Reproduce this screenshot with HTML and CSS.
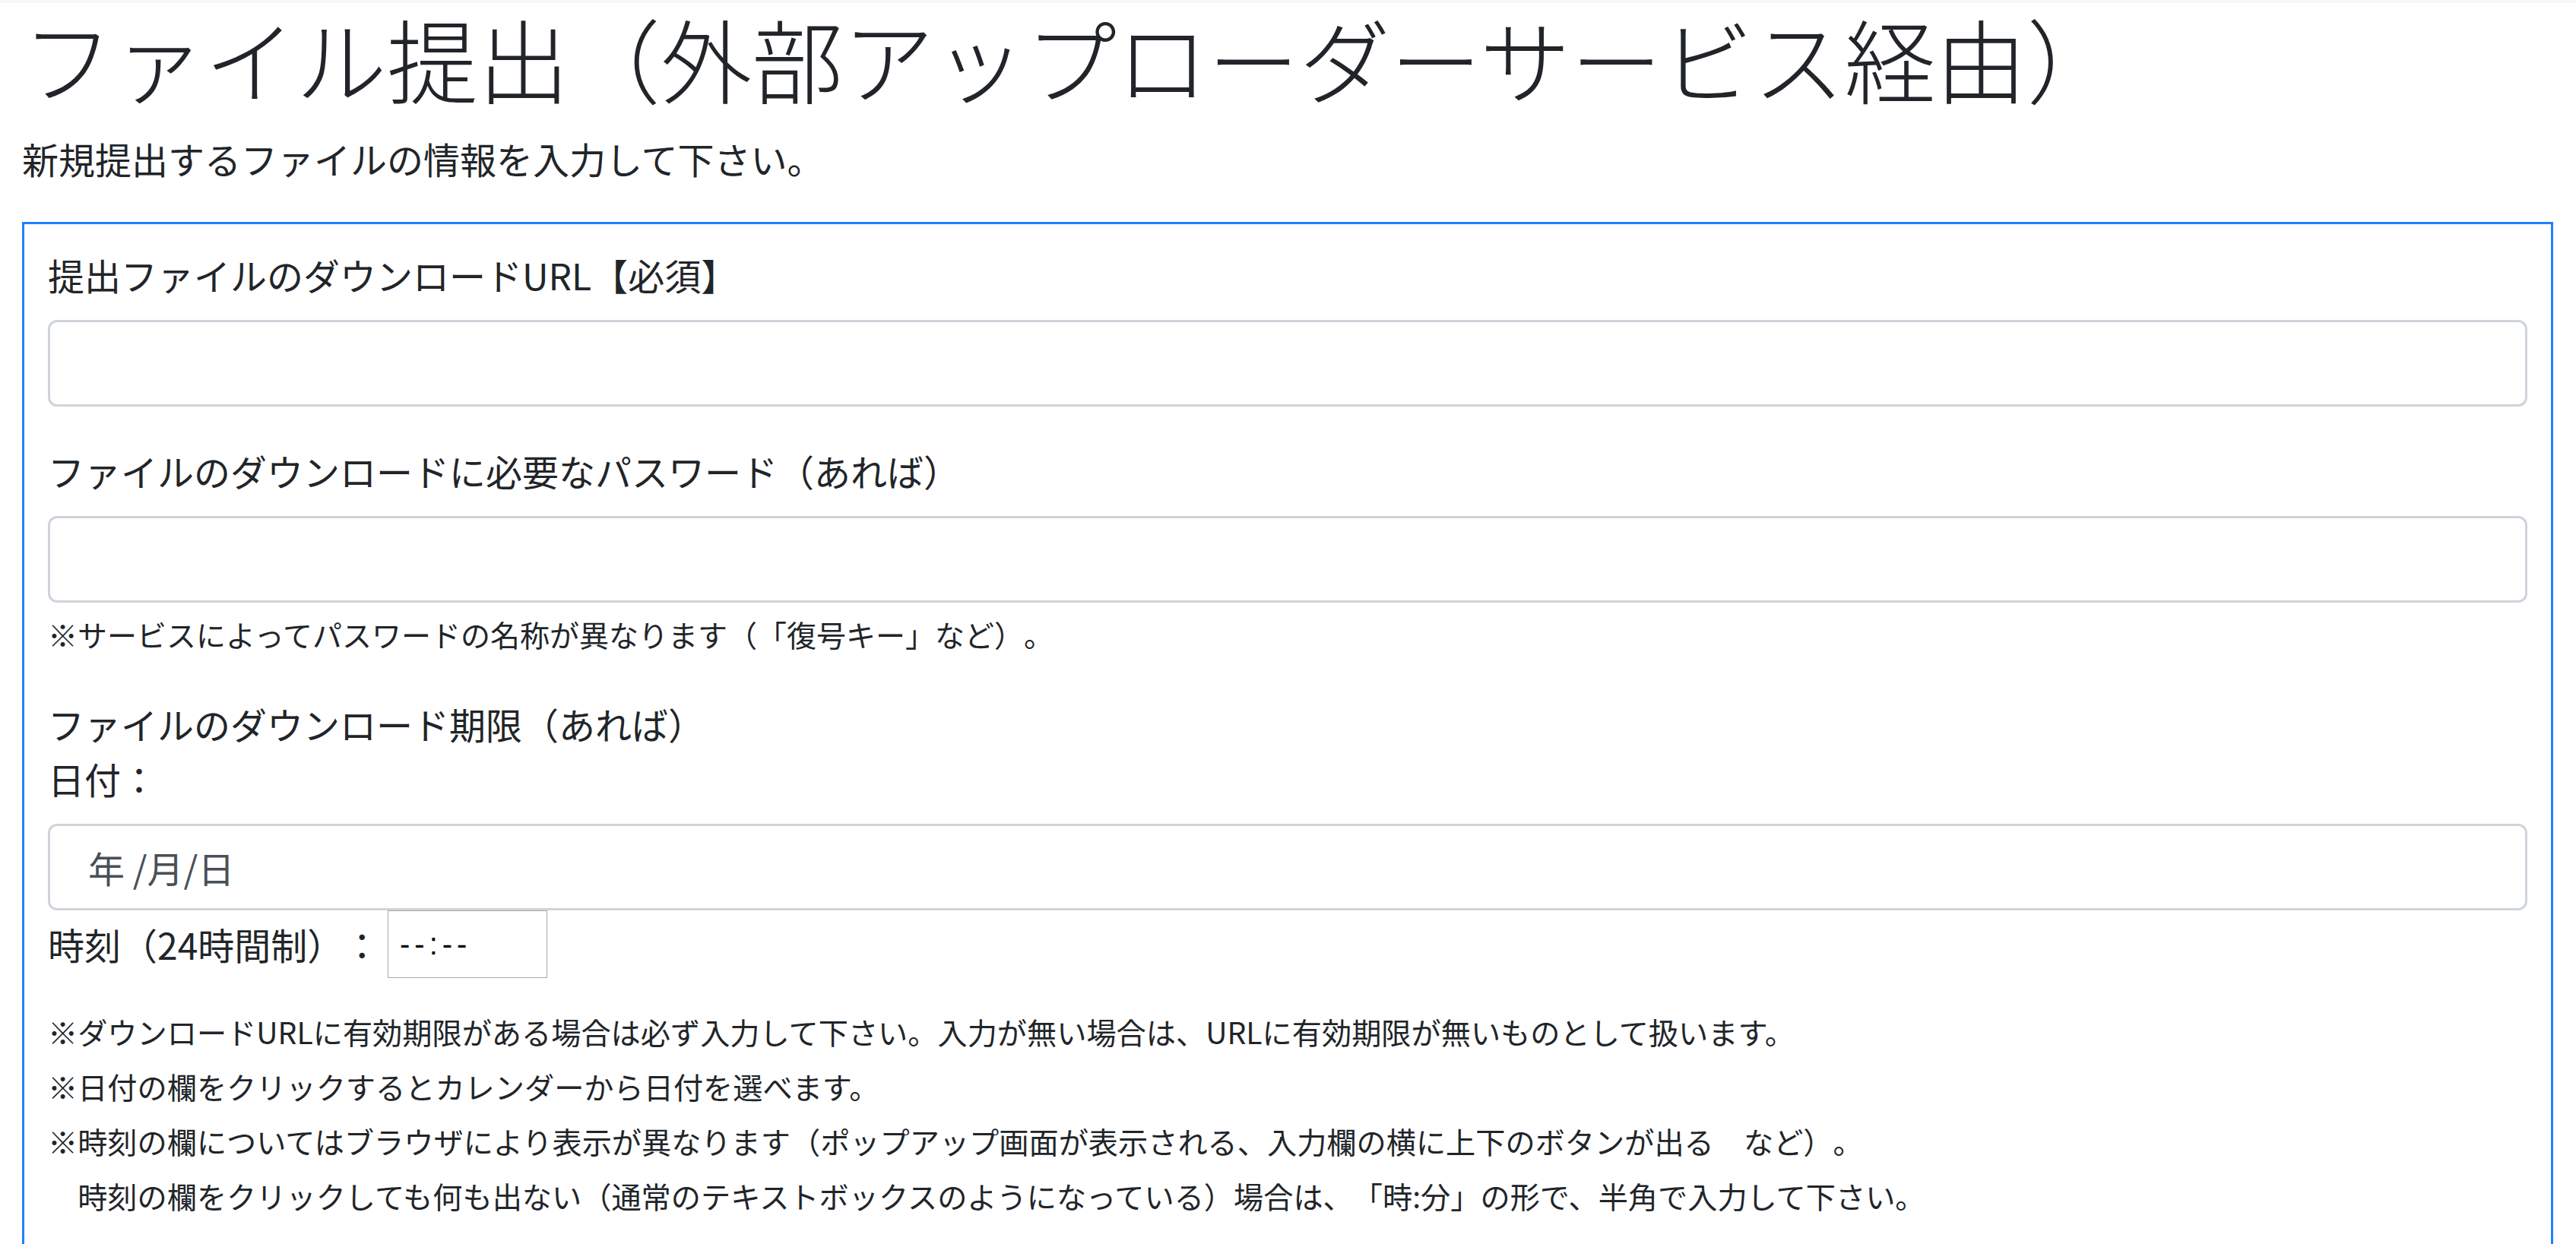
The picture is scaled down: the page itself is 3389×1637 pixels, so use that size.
FILE: index.html
```
<!DOCTYPE html>
<html lang="ja">

<head>
    <meta charset="UTF-8">
    <meta name="viewport" content="width=device-width, initial-scale=1.0">
    <title>ファイル提出（外部アップローダーサービス経由）</title>
    <link rel="stylesheet" href="styles.css">
</head>

<body>
    <div class="topbar"></div>

    <div class="page">
        <h1 class="page-title">ファイル提出（外部アップローダーサービス経由）</h1>
        <p class="page-lead">新規提出するファイルの情報を入力して下さい。</p>

        <form class="submit-box">
            <div class="form-group">
                <label for="file-url">提出ファイルのダウンロードURL【必須】</label>
                <input type="text" id="file-url" class="form-control">
            </div>

            <div class="form-group">
                <label for="file-pass">ファイルのダウンロードに必要なパスワード（あれば）</label>
                <input type="text" id="file-pass" class="form-control">
                <small class="form-text">※サービスによってパスワードの名称が異なります（「復号キー」など）。</small>
            </div>

            <div class="form-group limit-group">
                <div class="group-title">ファイルのダウンロード期限（あれば）</div>
                <label for="limit-date">日付：</label>
                <input type="text" id="limit-date" class="form-control date-field" placeholder="年 /月/日">

                <div class="time-row">
                    <label for="limit-time" class="time-label">時刻（24時間制）：</label>
                    <input type="text" id="limit-time" class="time-field" value="--:--">
                </div>

                <div class="notes">
                    <small>※ダウンロードURLに有効期限がある場合は必ず入力して下さい。入力が無い場合は、URLに有効期限が無いものとして扱います。</small><br>
                    <small>※日付の欄をクリックするとカレンダーから日付を選べます。</small><br>
                    <small>※時刻の欄についてはブラウザにより表示が異なります（ポップアップ画面が表示される、入力欄の横に上下のボタンが出る　など）。</small><br>
                    <small>　時刻の欄をクリックしても何も出ない（通常のテキストボックスのようになっている）場合は、「時:分」の形で、半角で入力して下さい。</small>
                </div>
            </div>
        </form>
    </div>
</body>

</html>
```

FILE: styles.css
```
html {
    overflow: hidden;
}

body {
    margin: 0;
    font-family: "Noto Sans CJK JP", "Noto Sans", sans-serif;
    font-size: 48px;
    line-height: 1.5;
    color: #212529;
    background-color: #fff;
    text-spacing-trim: space-all;
}

.topbar {
    height: 4px;
    background-color: #f6f7f8;
}

.page {
    padding: 0 30px 0 29px;
}

.page-title {
    margin: 0 0 24px;
    font-size: 120px;
    font-weight: 300;
    line-height: 1.2;
}

.page-lead {
    margin: 0 0 48px;
}

.submit-box {
    border: 3px solid #2080ff;
    padding: 30px 31px 90px 31px;
}

.form-group {
    margin-bottom: 48px;
}

.form-group:last-child {
    margin-bottom: 0;
}

label {
    display: inline-block;
    margin-bottom: 24px;
}

.form-control {
    display: block;
    width: 100%;
    height: 114px;
    padding: 18px 36px;
    font-family: inherit;
    font-size: 48px;
    line-height: 1.5;
    color: #495057;
    background-color: #fff;
    border: 3px solid #ced4da;
    border-radius: 12px;
    box-sizing: border-box;
    outline: none;
}

.form-text {
    display: block;
    margin-top: 12px;
    font-size: 39px;
}

.limit-group {
    padding-top: 4px;
}

.date-field {
    padding-left: 50px;
}

.date-field::placeholder {
    color: #495057;
    opacity: 1;
}

.time-row {
    display: flex;
    align-items: center;
}

.time-label {
    margin-bottom: 0;
    width: 447px;
}

.time-field {
    width: 210px;
    height: 89px;
    padding: 0 0 0 15px;
    box-sizing: border-box;
    border: 1px solid #a9a9a9;
    font-family: "Liberation Sans", Arial, sans-serif;
    font-size: 40px;
    letter-spacing: 6px;
    color: #000;
    outline: none;
}

.notes {
    margin-top: 30px;
}

.notes small {
    font-size: 39.2px;
}
```
